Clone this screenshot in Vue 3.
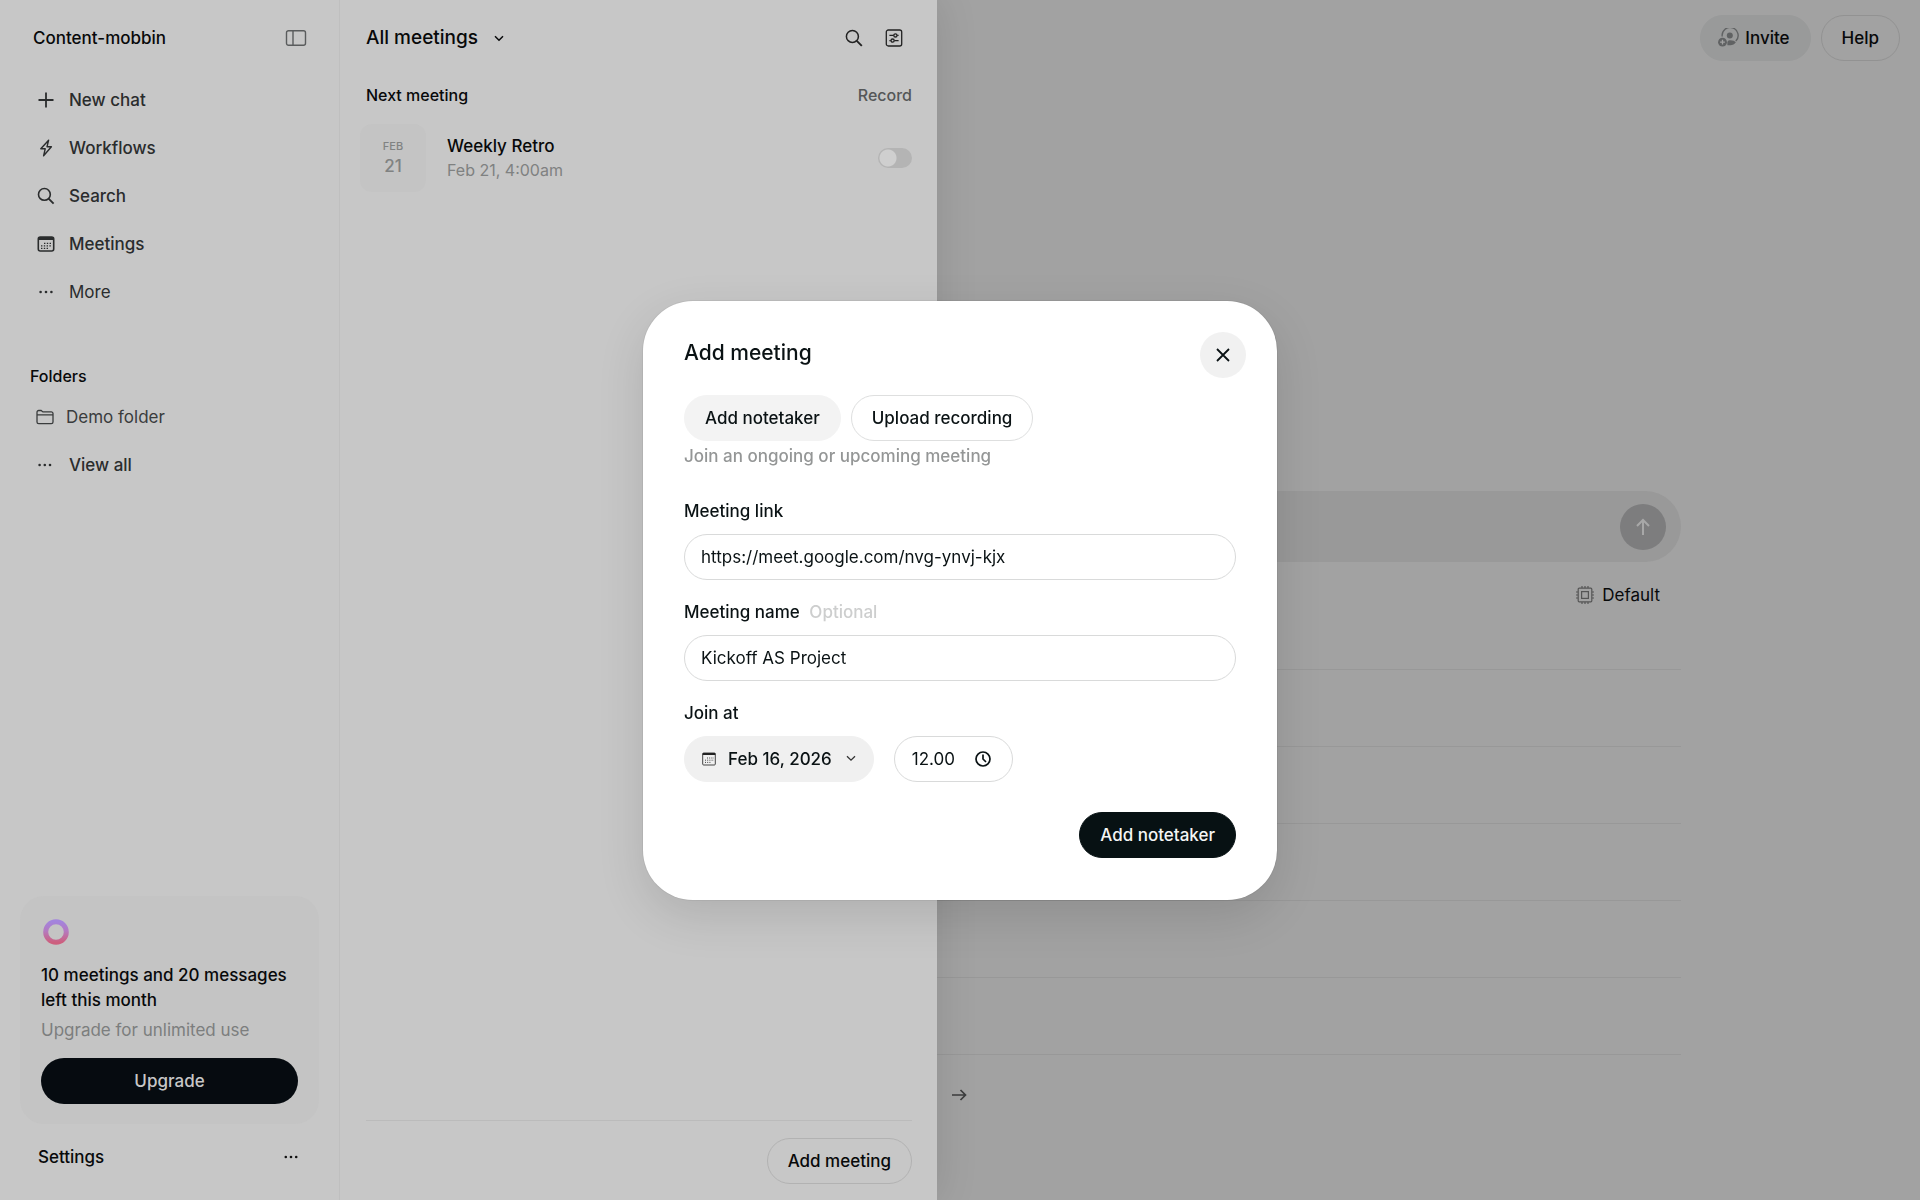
<script setup>
import { ref } from "vue";

const navItems = [
  { id: "new", label: "New chat", icon: "plus" },
  { id: "workflows", label: "Workflows", icon: "bolt" },
  { id: "search", label: "Search", icon: "search" },
  { id: "meetings", label: "Meetings", icon: "calendar" },
  { id: "more", label: "More", icon: "dots", light: true },
];

const rows = [1, 2, 3, 4, 5];

const record = ref(false);
const link = ref("https://meet.google.com/nvg-ynvj-kjx");
const name = ref("Kickoff AS Project");
const time = ref("12.00");
</script>

<template>
  <div class="app">
    <aside class="sidebar">
      <div class="workspace">
        <span>Content-mobbin</span>
        <button class="icon-btn" aria-label="Toggle sidebar">
          <svg width="22" height="18" viewBox="0 0 22 18" fill="none" stroke="#5a5c5d" stroke-width="1.4">
            <rect x="1.5" y="1.7" width="19" height="14.6" rx="2" />
            <path d="M8 2v14" />
          </svg>
        </button>
      </div>

      <nav class="nav">
        <a v-for="item in navItems" :key="item.id" href="#" class="nav-item" :class="{ light: item.light }">
          <svg width="18" height="18" viewBox="0 0 18 18" fill="none" stroke="currentColor" stroke-width="1.6">
            <path v-if="item.icon === 'plus'" d="M9 1.5v15M1.5 9h15" stroke-width="1.8" />
            <path v-else-if="item.icon === 'bolt'" d="M11.6 1.2 3.8 9.8h4.4L6.6 16.8l7.8-9H10z" stroke-width="1.4" stroke-linejoin="round" />
            <g v-else-if="item.icon === 'search'">
              <circle cx="7.4" cy="7.4" r="5.9" />
              <path d="m11.6 11.6 5 5" stroke-width="1.9" />
            </g>
            <g v-else-if="item.icon === 'calendar'">
              <rect x="1.3" y="2" width="15.4" height="14" rx="2" />
              <path d="M1.5 3.5h15" stroke-width="3" />
              <path d="M7 8.4h8M4 10.9h11M4 13.3h7" stroke-width="1.3" stroke-dasharray="1.4 1.4" />
            </g>
            <g v-else fill="currentColor" stroke="none">
              <circle cx="3.6" cy="9" r="1.3" />
              <circle cx="9" cy="9" r="1.3" />
              <circle cx="14.4" cy="9" r="1.3" />
            </g>
          </svg>
          <span>{{ item.label }}</span>
        </a>
      </nav>

      <h2 class="folders-title">Folders</h2>
      <a href="#" class="folder">
        <svg width="18" height="18" viewBox="0 0 18 18" fill="none" stroke="currentColor" stroke-width="1.3">
          <path d="M1 14V4.2A1.7 1.7 0 0 1 2.7 2.5h2.4l1.8 1.4h8.4A1.7 1.7 0 0 1 17 5.6V14a1.7 1.7 0 0 1-1.7 1.7H2.7A1.7 1.7 0 0 1 1 14zM1 6.8h16" />
        </svg>
        <span>Demo folder</span>
      </a>
      <a href="#" class="nav-item">
        <svg width="18" height="18" viewBox="0 0 18 18" fill="currentColor">
          <circle cx="2.6" cy="9" r="1.3" />
          <circle cx="7.8" cy="9" r="1.3" />
          <circle cx="13" cy="9" r="1.3" />
        </svg>
        <span>View all</span>
      </a>

      <div class="sidebar-bottom">
        <section class="plan">
          <svg class="ring" width="30" height="30" viewBox="0 0 30 30" fill="none">
            <defs>
              <linearGradient id="ring" x1="0" y1="0" x2="0" y2="1">
                <stop offset="0" stop-color="#a384dd" />
                <stop offset="0.45" stop-color="#b47ac0" />
                <stop offset="1" stop-color="#cd5f7e" />
              </linearGradient>
            </defs>
            <circle cx="15" cy="15" r="10.3" stroke="url(#ring)" stroke-width="5" />
          </svg>
          <p class="plan-title">10 meetings and 20 messages left this month</p>
          <p class="plan-sub">Upgrade for unlimited use</p>
          <button class="upgrade">Upgrade</button>
        </section>
        <div class="settings">
          <a href="#">Settings</a>
          <button class="icon-btn" aria-label="More settings">
            <svg width="16" height="18" viewBox="0 0 16 18" fill="#111">
              <circle cx="2.8" cy="9" r="1.3" />
              <circle cx="8" cy="9" r="1.3" />
              <circle cx="13.2" cy="9" r="1.3" />
            </svg>
          </button>
        </div>
      </div>
    </aside>

    <main class="main">
      <div class="topbar">
        <button class="pill invite">
          <svg width="22" height="20" viewBox="0 0 22 20" fill="none" stroke="#606263" stroke-width="1.4">
            <path d="M5.2 8.5a8 8 0 1 1 13.6 4.6" />
            <circle cx="12.8" cy="7.6" r="3" fill="#606263" stroke="none" />
            <path d="M10.5 17.2c-.6-3.9.4-5 2.8-5 2.6 0 4.400.8 5.600 2-1.300 2-3.300 3-5.600 3z" fill="#606263" stroke="none" />
            <circle cx="5.500" cy="14.200" r="4.400" fill="#606263" stroke="none" />
            <path d="M5.500 11.800v4.800M3.100 14.200h4.800" stroke="#a2a2a2" stroke-width="1.300" />
          </svg>
          Invite
        </button>
        <button class="pill help">Help</button>
      </div>

      <div class="content">
        <div class="composer">
          <button class="send" aria-label="Send">
            <svg width="16" height="18" viewBox="0 0 16 18" fill="none" stroke="#a8a8a8" stroke-width="2">
              <path d="M8 17V2M2 8l6-6 6 6" />
            </svg>
          </button>
        </div>
        <button class="model">
          <svg width="18" height="18" viewBox="0 0 18 18" fill="none" stroke="#555" stroke-width="1.2">
            <rect x="2.2" y="2.2" width="13.6" height="13.6" rx="1" />
            <rect x="5.6" y="5.6" width="6.8" height="6.8" />
            <path d="M6 0v2M9 0v2M12 0v2M6 16v2M9 16v2M12 16v2M0 6h2M0 9h2M0 12h2M16 6h2M16 9h2M16 12h2" />
          </svg>
          Default
        </button>
        <ul class="rows">
          <li v-for="row in rows" :key="row"></li>
        </ul>
        <a href="#" class="next" aria-label="Next">
          <svg width="15" height="12" viewBox="0 0 15 12" fill="none" stroke="#3c3d3e" stroke-width="1.7">
            <path d="M0 6h13M8.500 1l5 5-5 5" />
          </svg>
        </a>
      </div>

      <section class="panel">
        <header class="panel-head">
          <button class="filter">
            All meetings
            <svg width="10" height="7" viewBox="0 0 10 7" fill="none" stroke="currentColor" stroke-width="1.5">
              <path d="m1 1.2 4 4 4-4" />
            </svg>
          </button>
          <div class="panel-tools">
            <button class="icon-btn" aria-label="Search meetings">
              <svg width="18" height="18" viewBox="0 0 18 18" fill="none" stroke="#222" stroke-width="1.5">
                <circle cx="7.4" cy="7.4" r="6" />
                <path d="m11.800 11.800 5 5" stroke-width="1.900" />
              </svg>
            </button>
            <button class="icon-btn" aria-label="Filters">
              <svg width="18" height="18" viewBox="0 0 18 18" fill="none" stroke="#222" stroke-width="1.3">
                <rect x="1.300" y="1" width="15.400" height="16" rx="2" />
                <path d="M4.400 6.400h4.200M12.200 6.400h1.400M4.400 11.600h1.400M9.400 11.600h4.200" />
                <circle cx="10.400" cy="6.400" r="1.600" />
                <circle cx="7.600" cy="11.600" r="1.600" />
              </svg>
            </button>
          </div>
        </header>

        <div class="panel-sub">
          <h2>Next meeting</h2>
          <span>Record</span>
        </div>

        <article class="meeting">
          <div class="date">
            <span class="month">FEB</span>
            <span class="day">21</span>
          </div>
          <div class="meeting-info">
            <h3>Weekly Retro</h3>
            <p>Feb 21, 4:00am</p>
          </div>
          <input v-model="record" class="switch" type="checkbox" aria-label="Record Weekly Retro">
        </article>

        <footer class="panel-foot">
          <button class="pill add">Add meeting</button>
        </footer>
      </section>
    </main>

    <div class="overlay">
      <form class="modal" role="dialog" aria-labelledby="modal-title" @submit.prevent>
        <header class="modal-head">
          <h1 id="modal-title">Add meeting</h1>
          <button type="button" class="close" aria-label="Close">
            <svg width="14" height="14" viewBox="0 0 14 14" fill="none" stroke="#0a1214" stroke-width="1.8">
              <path d="m1 1 12 12M13 1 1 13" />
            </svg>
          </button>
        </header>

        <div class="tabs">
          <button type="button" class="pill active">Add notetaker</button>
          <button type="button" class="pill">Upload recording</button>
        </div>
        <p class="hint">Join an ongoing or upcoming meeting</p>

        <div class="field">
          <label for="link">Meeting link</label>
          <input id="link" v-model="link" type="text">
        </div>
        <div class="field">
          <label for="name">Meeting name <span>Optional</span></label>
          <input id="name" v-model="name" type="text">
        </div>
        <div class="field">
          <label for="time">Join at</label>
          <div class="when">
            <button type="button" class="pill day-btn">
              <svg width="14" height="14" viewBox="0 0 14 14" fill="none" stroke="#444" stroke-width="1">
                <rect x="0.7" y="1" width="12.6" height="12" rx="1" />
                <path d="M0.7 2h12.6" stroke-width="2" stroke="#222" />
                <path d="M5 6h7M3 8.2h9M3 10.4h6" stroke-dasharray="1 1.2" />
              </svg>
              Feb 16, 2026
              <svg class="chevron" width="10" height="7" viewBox="0 0 10 7" fill="none" stroke="#333" stroke-width="1.3">
                <path d="m1 1.2 4 4 4-4" />
              </svg>
            </button>
            <div class="time">
              <input id="time" v-model="time" type="text">
              <svg width="16" height="16" viewBox="0 0 16 16" fill="none" stroke="#0a1214" stroke-width="1.7">
                <circle cx="8" cy="8" r="7" />
                <path d="M8 3.5V8l3 3" />
              </svg>
            </div>
          </div>
        </div>

        <button type="submit" class="pill submit">Add notetaker</button>
      </form>
    </div>
  </div>
</template>

<style>
body {
  margin: 0;
}
</style>

<style scoped>
* {
  box-sizing: border-box;
}

.app {
  display: flex;
  min-height: 100vh;
  background: #a2a2a2;
  color: #08090a;
  font-family: Inter, "Liberation Sans", sans-serif;
  font-size: 17px;
  font-weight: 500;
  line-height: 24px;
}

h1,
h2,
h3,
p,
ul {
  margin: 0;
  padding: 0;
  font-weight: 500;
}

a {
  color: inherit;
  text-decoration: none;
}

svg {
  display: block;
  flex: none;
}

button {
  border: none;
  padding: 0;
  background: none;
  color: inherit;
  font: inherit;
  white-space: nowrap;
  cursor: pointer;
}

.pill {
  display: flex;
  align-items: center;
  height: 46px;
  padding: 0 20px;
  border: 1px solid #dedfdf;
  border-radius: 23px;
}

.sidebar {
  display: flex;
  flex-direction: column;
  width: 340px;
  padding: 14px 20px 19px;
  border-right: 1px solid #bfbfbf;
  background: #c7c7c7;
}

.workspace {
  display: flex;
  align-items: center;
  justify-content: space-between;
  height: 48px;
  padding: 0 12px 0 13px;
}

.nav {
  margin-top: 14px;
}

.nav-item {
  display: flex;
  align-items: center;
  gap: 14px;
  height: 48px;
  padding-left: 17px;
  color: #2a2c2d;
}

.light {
  font-weight: 400;
}

.folders-title {
  margin: 48px 0 5px 10px;
  font-size: 16px;
}

.folder {
  display: flex;
  align-items: center;
  gap: 12px;
  height: 48px;
  padding-left: 16px;
  color: #3a3c3d;
  font-weight: 400;
}

.sidebar-bottom {
  margin-top: auto;
}

.plan {
  padding: 21px 21px 20px;
  border-radius: 24px;
  background: #c4c4c4;
}

.ring {
  margin-bottom: 16px;
}

.plan-title {
  line-height: 25px;
}

.plan-sub {
  margin: 5px 0 16px;
  color: #7c7e7e;
  font-weight: 400;
}

.upgrade {
  width: 100%;
  height: 46px;
  border-radius: 23px;
  background: #060b10;
  color: #c7c7c7;
}

.settings {
  display: flex;
  align-items: center;
  justify-content: space-between;
  height: 48px;
  margin-top: 9px;
  padding: 0 20px 0 18px;
}

.main {
  position: relative;
  display: flex;
  flex: 1;
  flex-direction: column;
}

.topbar {
  display: flex;
  justify-content: flex-end;
  gap: 10px;
  padding: 15px 20px;
}

.invite {
  gap: 6px;
  padding: 0 20px 0 16px;
  border-color: #999a9a;
  background: #999a9a;
}

.help {
  border-color: #929292;
}

.content {
  width: 100%;
  max-width: 1102px;
  margin: 415px auto 0;
}

.composer {
  display: flex;
  align-items: center;
  justify-content: flex-end;
  height: 71px;
  padding-right: 15px;
  border-radius: 36px;
  background: #999;
}

.send {
  display: flex;
  align-items: center;
  justify-content: center;
  width: 46px;
  height: 46px;
  border-radius: 50%;
  background: #7d7d7e;
}

.model {
  display: flex;
  align-items: center;
  gap: 8px;
  height: 46px;
  margin: 10px 21px 0 auto;
  font-weight: 400;
}

.rows {
  margin-top: 51px;
  border-top: 1px solid #989898;
  list-style: none;
}

.rows li {
  height: 77px;
  border-bottom: 1px solid #989898;
}

.next {
  display: block;
  margin-top: 34px;
  padding-left: 373px;
}

.panel {
  position: absolute;
  inset: 0 auto 0 0;
  display: flex;
  flex-direction: column;
  width: 597px;
  padding: 14px 25px 16px 26px;
  background: #c7c7c7;
  box-shadow: 0 0 40px rgba(0, 0, 0, 0.12);
  clip-path: inset(0 -60px 0 0);
}

.panel-head,
.panel-sub {
  display: flex;
  align-items: center;
  justify-content: space-between;
}

.panel-head {
  height: 48px;
  padding-right: 9px;
}

.filter {
  display: flex;
  align-items: center;
  gap: 16px;
  font-size: 19px;
}

.panel-tools {
  display: flex;
  gap: 22px;
}

.panel-sub {
  height: 24px;
  margin-top: 21px;
  font-size: 16px;
}

.panel-sub h2 {
  font-size: 16px;
}

.panel-sub span {
  color: #555758;
}

.meeting {
  display: flex;
  align-items: center;
  margin: 17px 0 0 -6px;
}

.date {
  display: flex;
  flex-direction: column;
  align-items: center;
  justify-content: center;
  width: 66px;
  height: 68px;
  border-radius: 12px;
  background: #c4c4c4;
  color: #808282;
}

.month {
  font-size: 11px;
  line-height: 16px;
}

.meeting-info {
  flex: 1;
  margin-left: 21px;
}

.meeting-info h3 {
  font-size: 17px;
}

.meeting-info p {
  color: #7f8181;
  font-size: 16px;
  font-weight: 400;
}

.switch {
  width: 34px;
  height: 20px;
  margin: 0;
  border-radius: 10px;
  background: radial-gradient(circle at 10px 10px, #cfcfcf 8px, #b4b4b4 9px);
  appearance: none;
}

.panel-foot {
  display: flex;
  justify-content: flex-end;
  margin-top: auto;
  padding-top: 17px;
  border-top: 1px solid #bbb;
}

.add {
  border-color: #b2b2b2;
}

.overlay {
  position: fixed;
  inset: 0;
  display: flex;
  align-items: center;
  justify-content: center;
}

.modal {
  display: flex;
  flex-direction: column;
  width: 634px;
  padding: 31px 41px 42px;
  border-radius: 50px;
  background: #fff;
  color: #0a1214;
  box-shadow: 0 0 0 1px rgba(0, 0, 0, 0.05), 0 16px 48px rgba(0, 0, 0, 0.12);
}

.modal-head {
  display: flex;
  justify-content: space-between;
  margin-right: -10px;
}

.modal-head h1 {
  font-size: 21px;
  line-height: 42px;
}

.close {
  display: flex;
  align-items: center;
  justify-content: center;
  width: 46px;
  height: 46px;
  border-radius: 50%;
  background: #f1f1f1;
}

.tabs {
  display: flex;
  gap: 10px;
  margin-top: 17px;
}

.active {
  border-color: #f3f3f3;
  background: #f3f3f3;
}

.hint {
  margin: 3px 0 11px;
  color: #949696;
}

.field {
  display: flex;
  flex-direction: column;
  gap: 11px;
  margin-top: 20px;
}

.field label span {
  margin-left: 5px;
  color: #cdcece;
}

.field > input {
  height: 46px;
  padding: 0 16px;
  border: 1px solid #d9dada;
  border-radius: 23px;
  color: inherit;
  font: inherit;
  font-weight: 400;
}

.when {
  display: flex;
  gap: 20px;
}

.day-btn {
  gap: 12px;
  padding: 0 17px;
  border-color: #f0f0f0;
  background: #f0f0f0;
}

.chevron {
  margin-left: 2px;
}

.time {
  display: flex;
  align-items: center;
  width: 119px;
  height: 46px;
  padding: 0 21px 0 17px;
  border: 1px solid #d9dada;
  border-radius: 23px;
}

.time input {
  flex: 1;
  min-width: 0;
  padding: 0;
  border: none;
  color: inherit;
  font: inherit;
  font-weight: 400;
}

.submit {
  align-self: flex-end;
  margin-top: 30px;
  border-color: #071113;
  background: #071113;
  color: #f4f5f5;
}
</style>
